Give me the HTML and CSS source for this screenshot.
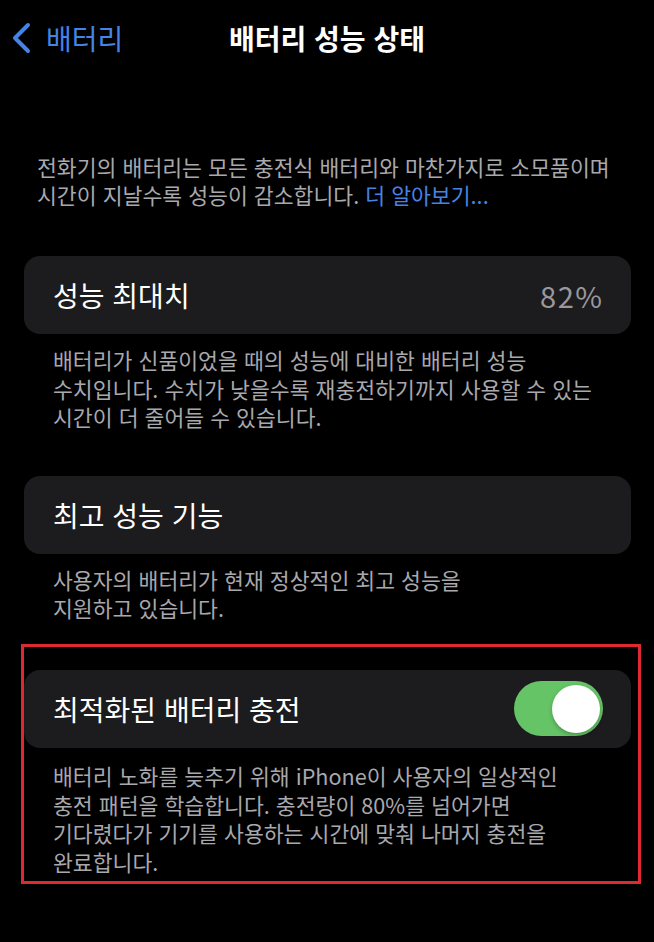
FILE: index.html
```html
<!DOCTYPE html>
<html lang="ko">
<head>
<meta charset="utf-8">
<title>배터리 성능 상태</title>
<link rel="stylesheet" href="styles.css">
</head>
<body>
<div class="screen">
  <header class="nav">
    <div class="back">
      <svg class="chev" width="22" height="32" viewBox="0 0 22 32" aria-hidden="true">
        <path d="M18 3 L5 16 L18 29" fill="none" stroke="#4584e6" stroke-width="4" stroke-linecap="round" stroke-linejoin="round"/>
      </svg>
      <span class="back-label">배터리</span>
    </div>
    <div class="title">배터리 성능 상태</div>
    <div class="spacer"></div>
  </header>

  <p class="intro">전화기의 배터리는 모든 충전식 배터리와 마찬가지로 소모품이며<br>시간이 지날수록 성능이 감소합니다. <span class="link">더 알아보기...</span></p>

  <div class="card card-first">
    <span class="label">성능 최대치</span>
    <span class="value">82%</span>
  </div>
  <p class="footer">배터리가 신품이었을 때의 성능에 대비한 배터리 성능<br>수치입니다. 수치가 낮을수록 재충전하기까지 사용할 수 있는<br>시간이 더 줄어들 수 있습니다.</p>

  <div class="card card-second">
    <span class="label">최고 성능 기능</span>
  </div>
  <p class="footer">사용자의 배터리가 현재 정상적인 최고 성능을<br>지원하고 있습니다.</p>

  <div class="highlight">
    <div class="card card-third">
      <span class="label">최적화된 배터리 충전</span>
      <span class="toggle"><span class="knob"></span></span>
    </div>
    <p class="footer footer-in">배터리 노화를 늦추기 위해 iPhone이 사용자의 일상적인<br>충전 패턴을 학습합니다. 충전량이 80%를 넘어가면<br>기다렸다가 기기를 사용하는 시간에 맞춰 나머지 충전을<br>완료합니다.</p>
  </div>
</div>
</body>
</html>
```

FILE: styles.css
```css
html, body {
  margin: 0;
  padding: 0;
  background: #000;
}
body {
  font-family: "Noto Sans CJK KR", "Noto Sans", sans-serif;
  color: #fff;
}
.screen {
  width: 654px;
  height: 942px;
  overflow: hidden;
  background: #000;
}
.nav {
  height: 76px;
  display: grid;
  grid-template-columns: 1fr auto 1fr;
  align-items: center;
}
.back {
  display: flex;
  align-items: center;
  padding-left: 10px;
  gap: 14px;
}
.chev {
  display: block;
}
.back-label {
  color: #4584e6;
  font-size: 28px;
  line-height: 34px;
}
.title {
  font-size: 28px;
  font-weight: 600;
  line-height: 34px;
}
.intro {
  margin: 77px 0 0 0;
  padding-left: 37px;
  font-size: 21.6px;
  line-height: 28px;
  color: #a8a8ad;
}
.link {
  color: #4584e6;
}
.card {
  margin: 0 23px 0 24px;
  height: 78px;
  background: #1c1c1e;
  border-radius: 16px;
  display: flex;
  align-items: center;
  justify-content: space-between;
  padding: 0 29px;
  box-sizing: border-box;
}
.card-first {
  margin-top: 47px;
}
.card-second {
  margin-top: 44px;
}
.label {
  font-size: 28px;
  line-height: 34px;
  color: #fff;
}
.value {
  font-size: 29px;
  line-height: 34px;
  letter-spacing: 1.5px;
  margin-right: -1.5px;
  color: #98989e;
}
.footer {
  margin: 12px 0 0 0;
  padding-left: 53px;
  font-size: 21.6px;
  line-height: 28.6px;
  color: #a8a8ad;
}
.highlight {
  margin: 21px 0 0 21px;
  width: 620px;
  box-sizing: border-box;
  border: 3px solid #dd2a30;
  padding: 23px 7px 5px 0;
}
.highlight .card {
  margin: 0;
}
.card-third {
  padding-right: 28px;
}
.footer-in {
  margin-top: 14px;
  padding-left: 29px;
}
.toggle {
  width: 89px;
  height: 55px;
  border-radius: 28px;
  background: #65c466;
  display: flex;
  align-items: center;
  justify-content: flex-end;
  padding: 0 3px;
  box-sizing: border-box;
}
.knob {
  width: 48px;
  height: 48px;
  border-radius: 50%;
  background: #fff;
  box-shadow: 0 2px 4px rgba(0,0,0,0.25);
}
```
